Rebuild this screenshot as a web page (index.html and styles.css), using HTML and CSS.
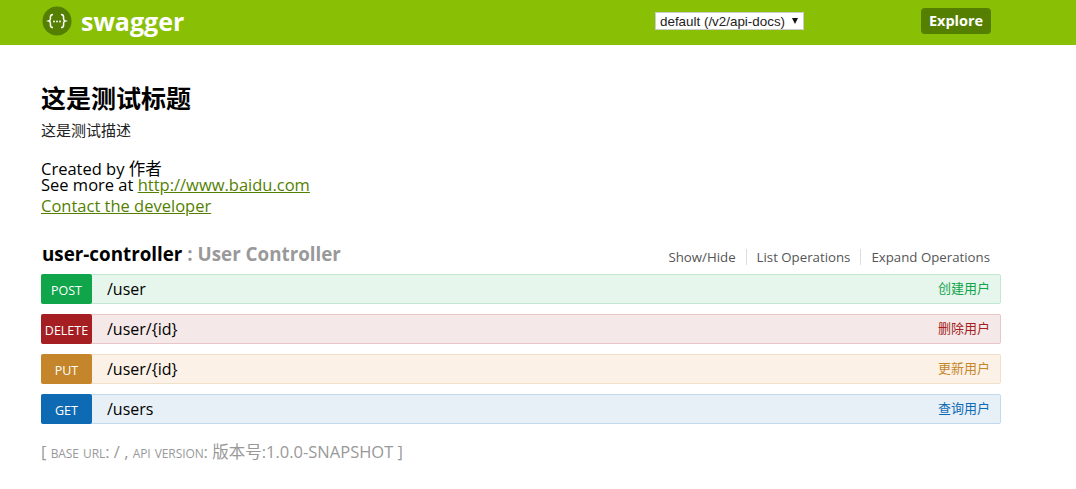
FILE: index.html
```html
<!doctype html>
<html lang="en">
<head>
  <meta charset="UTF-8">
  <title>Swagger UI</title>
  <link rel="stylesheet" href="styles.css">
</head>
<body>
  <div class="header">
    <div class="header-inner">
      <a class="logo" href="#">
        <svg class="logo-icon" width="30" height="30" viewBox="0 0 30 30">
          <circle cx="15" cy="15" r="14.5" fill="#547f00"/>
          <path d="M11 8.5c-2.2 0-2.6 1-2.6 2.6v1.6c0 1.2-.5 2-1.6 2.3 1.1.3 1.6 1.1 1.6 2.3v1.6c0 1.6.4 2.6 2.6 2.6M19 8.5c2.2 0 2.6 1 2.6 2.6v1.6c0 1.2.5 2 1.6 2.3-1.1.3-1.6 1.1-1.6 2.3v1.6c0 1.6-.4 2.6-2.6 2.6" fill="none" stroke="#fff" stroke-width="1.5"/>
          <circle cx="12" cy="15.5" r=".9" fill="#fff"/>
          <circle cx="15" cy="15.5" r=".9" fill="#fff"/>
          <circle cx="18" cy="15.5" r=".9" fill="#fff"/>
        </svg>
        <span class="logo-text">swagger</span>
      </a>
      <span class="select-wrap">
        <select class="spec-select">
          <option>default (/v2/api-docs)</option>
        </select>
      </span>
      <a class="explore" href="#">Explore</a>
    </div>
  </div>

  <div class="container">
    <div class="info">
      <h1 class="info-title">这是测试标题</h1>
      <p class="info-desc">这是测试描述</p>
      <div class="info-meta">Created by 作者</div>
      <div class="info-meta">See more at <a href="#">http://www.baidu.com</a></div>
      <div class="info-contact"><a href="#">Contact the developer</a></div>
    </div>

    <div class="resource-head">
      <h2 class="resource-title">user-controller <span>: User Controller</span></h2>
      <ul class="resource-links">
        <li>Show/Hide</li>
        <li>List Operations</li>
        <li>Expand Operations</li>
      </ul>
    </div>

    <ul class="ops">
      <li class="op post"><span class="method">POST</span><span class="path">/user</span><span class="summary">创建用户</span></li>
      <li class="op delete"><span class="method">DELETE</span><span class="path">/user/{id}</span><span class="summary">删除用户</span></li>
      <li class="op put"><span class="method">PUT</span><span class="path">/user/{id}</span><span class="summary">更新用户</span></li>
      <li class="op get"><span class="method">GET</span><span class="path">/users</span><span class="summary">查询用户</span></li>
    </ul>

    <div class="footer-note">[ <span class="small">base url</span>: / , <span class="small">api version</span>: 版本号:1.0.0-SNAPSHOT ]</div>
  </div>
</body>
</html>
```

FILE: styles.css
```css
* {
  box-sizing: border-box;
}
body {
  margin: 0;
  background: #fff;
  color: #000;
  font-family: "Open Sans", "Noto Sans CJK SC", sans-serif;
}
a {
  color: #547f00;
}
.header {
  height: 45px;
  background: #89bf04;
}
.header-inner {
  display: flex;
  align-items: center;
  width: 949px;
  height: 45px;
  margin-left: 42px;
}
.logo {
  display: flex;
  align-items: center;
  width: 613px;
  margin-top: -3px;
  color: #fff;
  text-decoration: none;
}
.logo-icon {
  margin-right: 9px;
}
.logo-text {
  font-size: 25px;
  font-weight: 700;
  line-height: 30px;
}
.select-wrap {
  position: relative;
  display: block;
  width: 149px;
  height: 18px;
  margin-top: -3px;
}
.select-wrap::after {
  content: "";
  position: absolute;
  top: 6px;
  right: 6px;
  border-top: 6px solid #111;
  border-left: 3px solid transparent;
  border-right: 3px solid transparent;
}
.spec-select {
  display: block;
  width: 149px;
  height: 18px;
  padding: 0 0 0 4px;
  border: 1px solid #ccc;
  border-radius: 0;
  background: #fff;
  color: #222;
  font-family: "Liberation Sans", sans-serif;
  font-size: 13.4px;
  appearance: none;
}
.explore {
  margin-left: auto;
  margin-top: -3px;
  padding: 4px 0;
  width: 70px;
  border-radius: 4px;
  background: #547f00;
  color: #fff;
  font-size: 14.5px;
  font-weight: 700;
  line-height: 18px;
  text-align: center;
  text-decoration: none;
}
.container {
  width: 960px;
  margin-left: 41px;
}
.info {
  padding-top: 36px;
}
.info-title {
  margin: 0;
  font-size: 25px;
  font-weight: 700;
  line-height: 34px;
}
.info-desc {
  margin: 4px 0 20px;
  color: #222;
  font-size: 15px;
  line-height: 22px;
}
.info-meta {
  font-size: 16.5px;
  line-height: 16px;
}
.info-contact {
  margin-top: 2px;
  font-size: 16.5px;
  line-height: 22px;
}
.resource-head {
  display: flex;
  align-items: flex-start;
  justify-content: space-between;
  height: 37px;
  margin-top: 20px;
  padding: 0 1px;
}
.resource-title {
  margin: 0;
  font-size: 18.8px;
  font-weight: 700;
  line-height: 34px;
}
.resource-title span {
  color: #999;
}
.resource-links {
  display: flex;
  margin: 12px 0 0;
  padding: 0 10px 0 0;
  list-style: none;
  color: #555;
  font-size: 13.25px;
  line-height: 16px;
}
.resource-links li {
  padding: 0 10px;
  border-right: 1px solid #ddd;
}
.resource-links li:last-child {
  padding-right: 0;
  border-right: 0;
}
.ops {
  margin: 0;
  padding: 0;
  list-style: none;
}
.op {
  display: flex;
  align-items: center;
  height: 30px;
  margin-bottom: 10px;
  border: 1px solid;
  border-radius: 2px;
  font-size: 16px;
}
.method {
  width: 51px;
  height: 30px;
  margin: -1px 0 -1px -1px;
  border-radius: 2px;
  color: #fff;
  font-size: 12.5px;
  line-height: 33px;
  text-align: center;
}
.path {
  margin-left: 15px;
  padding-bottom: 1px;
  flex: 1;
  color: #000;
}
.summary {
  padding: 0 10px 3px 0;
  font-size: 13px;
}
.post {
  background: #e7f6ec;
  border-color: #c3e8d1;
}
.post .method {
  background: #10a54a;
}
.post .summary {
  color: #10a54a;
}
.delete {
  background: #f5e8e8;
  border-color: #e8c6c7;
}
.delete .method {
  background: #a41e22;
}
.delete .summary {
  color: #a41e22;
}
.put {
  background: #fbf1e6;
  border-color: #f0e0ca;
}
.put .method {
  background: #c5862b;
}
.put .summary {
  color: #c5862b;
}
.get {
  background: #e7f0f7;
  border-color: #c3d9ec;
}
.get .method {
  background: #0f6ab4;
}
.get .summary {
  color: #0f6ab4;
}
.footer-note {
  margin-top: 17px;
  color: #999;
  font-size: 16.5px;
  line-height: 22px;
}
.footer-note .small {
  font-variant: small-caps;
  letter-spacing: -.1px;
}
```
